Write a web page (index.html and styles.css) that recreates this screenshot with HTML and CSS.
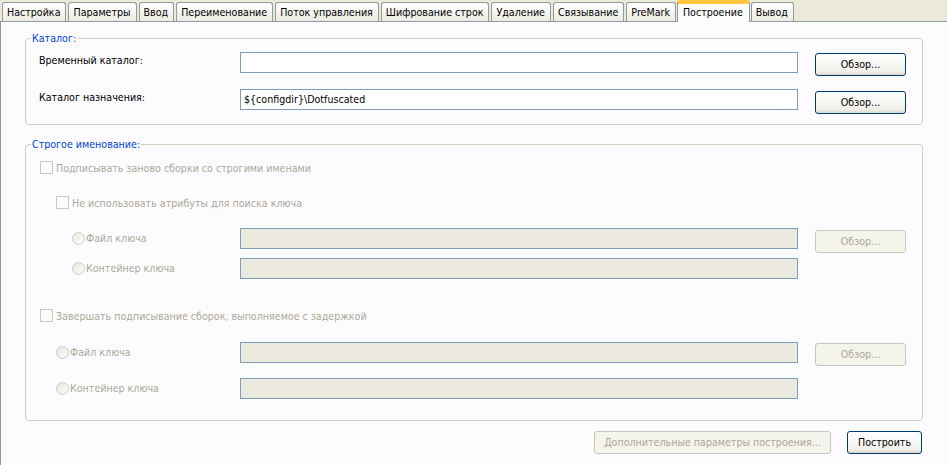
FILE: index.html
```html
<!DOCTYPE html>
<html lang="ru">
<head>
<meta charset="utf-8">
<title>Построение</title>
<link rel="stylesheet" href="styles.css">
</head>
<body>
<div class="tabs">
  <div class="tab">Настройка</div>
  <div class="tab">Параметры</div>
  <div class="tab">Ввод</div>
  <div class="tab">Переименование</div>
  <div class="tab">Поток управления</div>
  <div class="tab">Шифрование строк</div>
  <div class="tab">Удаление</div>
  <div class="tab">Связывание</div>
  <div class="tab">PreMark</div>
  <div class="tab active">Построение</div>
  <div class="tab">Вывод</div>
</div>
<div class="panel">
  <div class="group g1">
    <div class="legend">Каталог:</div>
    <div class="row">
      <div class="lbl">Временный каталог:</div>
      <div class="input"></div>
      <div class="btn browse">Обзор...</div>
    </div>
    <div class="row r-next">
      <div class="lbl">Каталог назначения:</div>
      <div class="input">${configdir}\Dotfuscated</div>
      <div class="btn browse b2">Обзор...</div>
    </div>
  </div>

  <div class="group g2 disabled">
    <div class="legend">Строгое именование:</div>
    <div class="row check ind1">
      <span class="cb"></span><span class="ctext">Подписывать заново сборки со строгими именами</span>
    </div>
    <div class="row check ind2 m14">
      <span class="cb"></span><span class="ctext">Не использовать атрибуты для поиска ключа</span>
    </div>
    <div class="row m15">
      <div class="lbl ind3"><span class="rb"></span><span class="ctext">Файл ключа</span></div>
      <div class="input"></div>
      <div class="btn browse b2 off">Обзор...</div>
    </div>
    <div class="row m9">
      <div class="lbl ind3"><span class="rb"></span><span class="ctext">Контейнер ключа</span></div>
      <div class="input"></div>
    </div>
    <div class="row check ind1 m26">
      <span class="cb"></span><span class="ctext">Завершать подписывание сборок, выполняемое с задержкой</span>
    </div>
    <div class="row m16">
      <div class="lbl ind2"><span class="rb"></span><span class="ctext">Файл ключа</span></div>
      <div class="input"></div>
      <div class="btn browse off">Обзор...</div>
    </div>
    <div class="row m15">
      <div class="lbl ind2"><span class="rb"></span><span class="ctext">Контейнер ключа</span></div>
      <div class="input"></div>
    </div>
  </div>

  <div class="actions">
    <div class="btn wide off">Дополнительные параметры построения...</div>
    <div class="btn build">Построить</div>
  </div>
</div>
</body>
</html>
```

FILE: styles.css
```css
* { box-sizing: border-box; }

html, body {
  margin: 0;
  padding: 0;
  width: 947px;
  height: 465px;
  overflow: hidden;
}

body {
  background: #ece9d8;
  font-family: "DejaVu Sans Condensed", "DejaVu Sans", sans-serif;
  font-size: 10.6px;
  color: #000;
}

/* ---------- tabs ---------- */
.tabs {
  display: flex;
  align-items: flex-end;
  height: 21px;
  padding-left: 2px;
  gap: 2px;
}

.tab {
  height: 19px;
  line-height: 19px;
  padding: 0 5px 0 4px;
  border: 1px solid #919b9c;
  border-bottom: none;
  border-radius: 3px 3px 0 0;
  background: linear-gradient(#ffffff, #f4f3ee 60%, #ecebe6);
  white-space: nowrap;
}

.tab.active {
  position: relative;
  z-index: 1;
  height: 22px;
  margin: 0 -1px -1px -1px;
  padding: 0 6px 0 5px;
  line-height: 18px;
  background: #fcfcfe;
  border-top: 3px solid #ffc83c;
  box-shadow: inset 0 1px 0 #ffc83c;
  border-radius: 3px 3px 0 0;
}

/* ---------- panel ---------- */
.panel {
  height: 444px;
  border-top: 1px solid #919b9c;
  border-left: 1px solid #919b9c;
  background: #fcfcfe;
  padding-top: 16px;
}

.group {
  position: relative;
  margin: 0 24px 0 24px;
  border: 1px solid #d0d0bf;
  border-radius: 4px;
}

.g1 { padding: 13px 0 14px 0; }
.g2 { margin-top: 19px; padding: 12px 0 21px 0; }

.legend {
  position: absolute;
  top: -7px;
  left: 5px;
  padding: 0 1px;
  line-height: 13px;
  background: #fcfcfe;
  color: #0046d5;
}

/* ---------- rows ---------- */
.row {
  display: flex;
  align-items: center;
  height: 21px;
}

.r-next { margin-top: 16px; }
.m9 { margin-top: 9px; }
.m14 { margin-top: 14px; }
.m15 { margin-top: 15px; }
.m16 { margin-top: 16px; }
.m26 { margin-top: 26px; }

.lbl {
  width: 214px;
  flex: none;
  padding-left: 13px;
  align-self: flex-start;
  margin-top: 2px;
  line-height: 13px;
  white-space: nowrap;
}

.row .lbl.ind2, .row .lbl.ind3 {
  display: flex;
  align-items: center;
  align-self: center;
  margin-top: 0;
}

.check.ind1 { padding-left: 14px; }
.check.ind2 { padding-left: 30px; }
.lbl.ind2 { padding-left: 30px; }
.lbl.ind3 { padding-left: 46px; }

.input {
  width: 558px;
  height: 21px;
  flex: none;
  border: 1px solid #7f9db9;
  background: #ffffff;
  padding: 0 3px;
  line-height: 19px;
  white-space: nowrap;
}

.disabled .input { background: #ebe9dd; }

.disabled .ctext { color: #aca899; }

.cb {
  width: 13px;
  height: 13px;
  flex: none;
  border: 1px solid #cac8bb;
  background: #fcfcfe;
  margin-right: 3px;
}

.rb {
  width: 13px;
  height: 13px;
  flex: none;
  border: 1px solid #cfcdc2;
  border-radius: 50%;
  background: linear-gradient(135deg, #e9e8e0, #fcfcfb);
  margin-right: 1px;
}

/* ---------- buttons ---------- */
.btn {
  height: 23px;
  flex: none;
  border: 1px solid #003c74;
  border-radius: 3px;
  background: linear-gradient(#ffffff, #f7f7f3 50%, #efeee8 85%, #dcd7cd);
  text-align: center;
  line-height: 21px;
  white-space: nowrap;
}

.browse {
  width: 91px;
  margin-left: 17px;
  align-self: flex-start;
  margin-top: 1px;
}

.browse.b2 { margin-top: 2px; }

.btn.off {
  border-color: #c9c7ba;
  background: #f5f4ea;
  color: #aca899;
}

.actions {
  display: flex;
  justify-content: flex-end;
  gap: 16px;
  margin: 10px 25px 0 0;
}

.wide { width: 237px; }
.build { width: 75px; }
```
